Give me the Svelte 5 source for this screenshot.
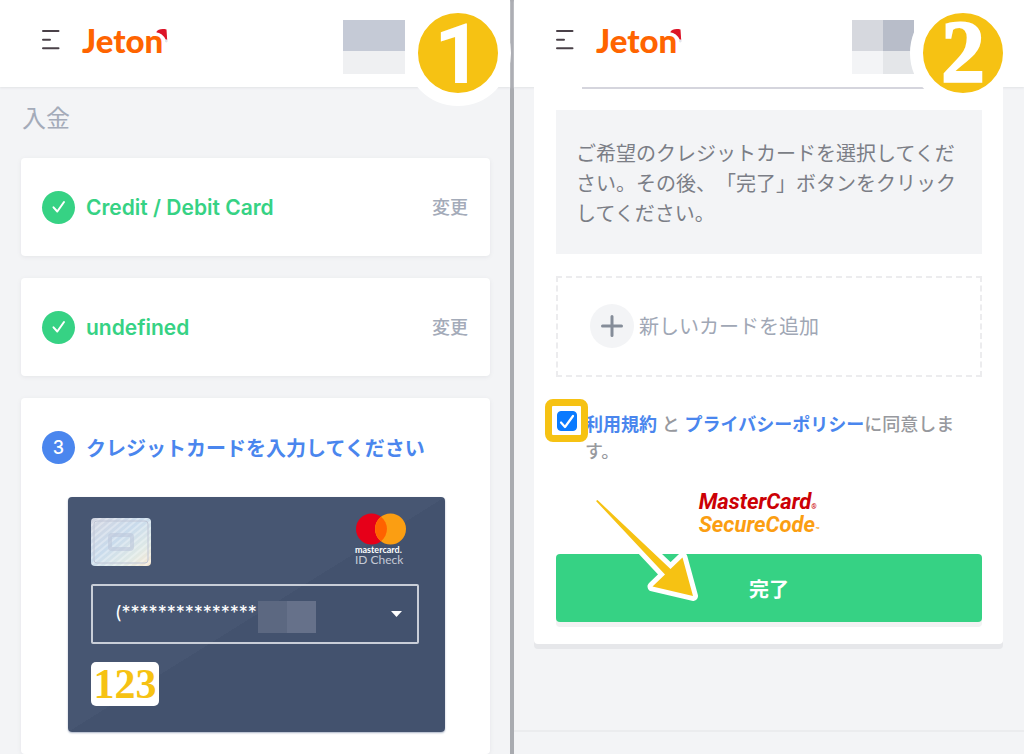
<script lang="ts">
  type Step = {
    id: number;
    title: string;
  };

  const doneSteps: Step[] = [
    { id: 1, title: 'Credit / Debit Card' },
    { id: 2, title: 'undefined' }
  ];

  let agreed = $state(true);
  let cvv = $state('123');
  let selectedCard = $state('saved');
</script>

{#snippet topbar()}
  <header class="topbar">
    <button class="menu" aria-label="Menu">
      <svg width="18" height="20" viewBox="0 0 18 20" fill="none" stroke="#4a4148" stroke-width="2" stroke-linecap="round">
        <path d="M1 1H16.5M1 9.7H8M1 18.3H16.5" />
      </svg>
    </button>
    <a class="logo" href="#home">
      Jeton
      <svg class="hat" width="14" height="14" viewBox="0 0 14 14">
        <path d="M2 3.500C4 0 8 -0.500 12.500 0.500L13.200 11L10.500 10.500Q8 5 2 3.500Z" fill="#dc1428" />
        <path d="M1.500 4.500Q8 5.500 10.500 11" stroke="#fff" stroke-width="2.500" fill="none" stroke-linecap="round" />
        <circle cx="12.300" cy="12" r="1.400" fill="#e4e5ec" />
      </svg>
    </a>
  </header>
{/snippet}

<div class="page">
  <section class="panel">
    {@render topbar()}
    <div class="mosaic mosaic-first"><i></i><i></i></div>
    <span class="badge badge-first">1</span>

    <main class="steps">
      <h1>入金</h1>

      {#each doneSteps as step (step.id)}
        <div class="card step">
          <span class="dot done">
            <svg width="14" height="14" viewBox="0 0 14 14" fill="none" stroke="#fff" stroke-width="2" stroke-linecap="round" stroke-linejoin="round">
              <path d="M1.500 7.300L5.300 11.500L12 2" />
            </svg>
          </span>
          <h2>{step.title}</h2>
          <button class="change">変更</button>
        </div>
      {/each}

      <div class="card current">
        <div class="step">
          <span class="dot">3</span>
          <h2 class="active">クレジットカードを入力してください</h2>
        </div>

        <div class="credit">
          <div class="credit-top">
            <svg width="60" height="48" viewBox="0 0 60 48">
              <defs>
                <linearGradient id="foil" x1="0" y1="0" x2="1" y2="1">
                  <stop offset="0" stop-color="#d3d5e0" />
                  <stop offset="0.450" stop-color="#c9dbec" />
                  <stop offset="0.750" stop-color="#dfe9e6" />
                  <stop offset="1" stop-color="#f8e6cf" />
                </linearGradient>
                <pattern id="lines" width="5" height="5" patternUnits="userSpaceOnUse" patternTransform="rotate(50)">
                  <rect width="2" height="5" fill="#fff" opacity="0.300" />
                </pattern>
              </defs>
              <rect width="60" height="48" rx="4" fill="url(#foil)" />
              <rect width="60" height="48" rx="4" fill="url(#lines)" />
              <rect x="3" y="3" width="54" height="42" rx="3" fill="none" stroke="#c0c6d6" />
              <rect x="19" y="17" width="22" height="14" rx="2" fill="none" stroke="#bcc6da" stroke-width="4" opacity="0.600" />
            </svg>
            <div class="idcheck">
              <svg width="52" height="32" viewBox="0 0 52 32">
                <circle cx="16.500" cy="16" r="15.500" fill="#e60019" />
                <circle cx="35.500" cy="16" r="15.500" fill="#fb9e12" />
                <path d="M26 3.800A15.500 15.500 0 0 1 26 28.200A15.500 15.500 0 0 1 26 3.800Z" fill="#ff6200" />
              </svg>
              <b>mastercard.</b>
              <span>ID Check</span>
            </div>
          </div>

          <div class="picker">
            <select aria-label="カード" bind:value={selectedCard}>
              <option value="saved">(***************</option>
            </select>
            <i class="mask"></i>
            <svg class="caret" width="11" height="6" viewBox="0 0 11 6"><path d="M0 0H11L5.500 6Z" fill="#fff" /></svg>
          </div>

          <input class="cvv" aria-label="CVV" maxlength="3" bind:value={cvv} />
        </div>
      </div>
    </main>
  </section>

  <section class="panel">
    {@render topbar()}
    <div class="mosaic mosaic-second"><i></i><i></i><i></i><i></i></div>
    <span class="badge badge-second">2</span>

    <main class="finish">
      <div class="edge"></div>
      <p class="note">ご希望のクレジットカードを選択してください。その後、「完了」ボタンをクリックしてください。</p>

      <button class="add">
        <span class="plus">
          <svg width="22" height="22" viewBox="0 0 22 22" stroke="#858d99" stroke-width="3" stroke-linecap="round">
            <path d="M11 1.500V20.500M1.500 11H20.500" />
          </svg>
        </span>
        新しいカードを追加
      </button>

      <div class="terms">
        <span class="tick">
          <input id="agree" type="checkbox" bind:checked={agreed} />
          {#if agreed}
            <svg width="20" height="20" viewBox="0 0 20 20" fill="none" stroke="#fff" stroke-width="2.200" stroke-linecap="round" stroke-linejoin="round">
              <path d="M4 11.500L8 16L16 5" />
            </svg>
          {/if}
        </span>
        <label for="agree"><a href="#terms">利用規約</a> と <a href="#privacy">プライバシーポリシー</a>に同意します。</label>
      </div>

      <div class="secure">
        <span class="red">MasterCard<small>®</small></span>
        <span class="orange">SecureCode<small>™</small></span>
      </div>

      <div class="action">
        <button class="submit">完了</button>
        <svg class="arrow" width="112" height="112" viewBox="590 494 112 112">
          <path d="M596 501L597.500 500L670.500 569L682.500 557.500L693 596L652.500 586.500L665 574.500Z" fill="#fff" stroke="#fff" stroke-width="10" stroke-linejoin="round" />
          <path d="M596 501L597.500 500L670.500 569L682.500 557.500L693 596L652.500 586.500L665 574.500Z" fill="#f6c213" />
        </svg>
      </div>
    </main>

    <footer></footer>
  </section>
</div>

<style>
:global(body) {
  margin: 0;
}
.page {
  display: grid;
  grid-template-columns: 1fr 1fr;
  column-gap: 4px;
  height: 100vh;
  overflow: hidden;
  background: #a9abb0;
  font-family: Inter, "Noto Sans CJK JP", sans-serif;
}
.page * {
  box-sizing: border-box;
}
.panel {
  position: relative;
  display: flex;
  flex-direction: column;
  min-height: 100vh;
  min-width: 0;
  background: #f3f4f6;
}
button {
  border: none;
  padding: 0;
  background: none;
  font: inherit;
  cursor: pointer;
}
a {
  color: #4a86ee;
  text-decoration: none;
}

/* header */
.topbar {
  display: flex;
  align-items: center;
  gap: 22px;
  height: 87px;
  flex: none;
  padding: 0 42px 8px;
  background: #fff;
  box-shadow: 0 1px 2px #e2e3e6;
}
.menu,
.menu svg {
  display: block;
}
.logo {
  position: relative;
  color: #ff6400;
  font-family: Lato, sans-serif;
  font-size: 33px;
  font-weight: 900;
  line-height: 40px;
}
.hat {
  position: absolute;
  top: 9px;
  right: -5px;
}
.mosaic {
  position: absolute;
  top: 20px;
  display: grid;
  grid-template-rows: 31px 23px;
  width: 62px;
}
.mosaic-first {
  left: 343px;
}
.mosaic-second {
  left: 338px;
  grid-template-columns: 1fr 1fr;
}
.mosaic-first i:nth-child(1) { background: #c5cad6; }
.mosaic-first i:nth-child(2) { background: #eff0f2; }
.mosaic-second i:nth-child(1) { background: #d6d8de; }
.mosaic-second i:nth-child(2) { background: #b8bdc9; }
.mosaic-second i:nth-child(3) { background: #f3f4f6; }
.mosaic-second i:nth-child(4) { background: #e4e6e9; }
.badge {
  position: absolute;
  top: 0;
  z-index: 2;
  display: flex;
  align-items: center;
  justify-content: center;
  width: 106px;
  height: 106px;
  border: 13px solid #fff;
  border-radius: 50%;
  background: #f6c213;
  color: #fff;
  font-weight: 700;
  line-height: 80px;
}
.badge-first {
  right: -1px;
  padding-top: 4px;
  font-family: Roboto, sans-serif;
  font-size: 84px;
}
.badge-second {
  right: 8px;
  padding-bottom: 2px;
  font-family: "Liberation Serif", serif;
  font-size: 88px;
  -webkit-text-stroke: 2px #fff;
}

/* left panel */
.steps {
  display: flex;
  flex: 1;
  flex-direction: column;
  gap: 22px;
  padding: 14px 20px 0 21px;
}
h1 {
  margin: 0;
  padding-left: 1px;
  color: #a4abb9;
  font-size: 24px;
  font-weight: 400;
  line-height: 35px;
}
.card {
  border-radius: 4px;
  background: #fff;
  box-shadow: 0 1px 4px #e4e5e8;
}
.step {
  display: flex;
  align-items: center;
  gap: 11px;
  height: 98px;
  padding: 0 22px 0 21px;
}
.dot {
  display: flex;
  align-items: center;
  justify-content: center;
  flex: none;
  width: 33px;
  height: 33px;
  border-radius: 50%;
  background: #4a86ee;
  color: #fff;
  font-size: 18px;
  font-weight: 500;
}
.done {
  background: #36d284;
}
h2 {
  flex: 1;
  margin: 0;
  color: #36d284;
  font-size: 21px;
  font-weight: 600;
  white-space: nowrap;
}
.active {
  color: #4a86ee;
  font-size: 20px;
}
.change {
  padding-bottom: 3px;
  color: #a4abb9;
  font-size: 18px;
  font-weight: 500;
}
.current {
  flex: 1;
}
.credit {
  display: flex;
  flex-direction: column;
  align-items: flex-start;
  gap: 18px;
  height: 235px;
  margin: 1px 45px 21px 47px;
  padding: 16px 26px 0 23px;
  border-radius: 4px;
  background: linear-gradient(to bottom right, #475672 50%, #43526e 50%);
  box-shadow: 0 1px 2px #aab4c6;
}
.credit-top {
  display: flex;
  justify-content: space-between;
  width: 100%;
  height: 53px;
  padding-right: 12px;
}
.credit-top > svg {
  margin-top: 5px;
}
.idcheck {
  display: flex;
  flex-direction: column;
  width: 52px;
  color: #fff;
  line-height: 10px;
  white-space: nowrap;
}
.idcheck b {
  font-family: Lato, sans-serif;
  font-size: 9px;
}
.idcheck span {
  color: #c5cad6;
  font-family: Lato, sans-serif;
  font-size: 12px;
}
.picker {
  position: relative;
  width: 100%;
}
select {
  display: block;
  width: 100%;
  height: 60px;
  padding: 0 22px 4px;
  border: 2px solid #c9ced8;
  border-radius: 2px;
  background: transparent;
  color: #fff;
  font-family: Inter, sans-serif;
  font-size: 18px;
  appearance: none;
}
.mask {
  position: absolute;
  top: 17px;
  left: 167px;
  width: 58px;
  height: 32px;
  background: linear-gradient(to right, #5c6881 50%, #66718a 50%);
}
.caret {
  position: absolute;
  top: 27px;
  right: 17px;
}
.cvv {
  width: 68px;
  height: 44px;
  padding: 0;
  border: none;
  border-radius: 5px;
  background: #fff;
  color: #f6c213;
  font-family: "Liberation Serif", serif;
  font-size: 42px;
  font-weight: 700;
  line-height: 44px;
  text-align: center;
}

/* right panel */
.finish {
  display: flex;
  flex-direction: column;
  margin: 0 21px 0 20px;
  padding: 0 21px 22px 22px;
  border-radius: 0 0 4px 4px;
  background: #fff;
  box-shadow: 0 5px 0 #e6e7ea;
}
.edge {
  position: relative;
  height: 2px;
  margin: 0 26px 21px;
  background: #d5d5dd;
}
.note {
  margin: 0 0 22px;
  padding: 29px 20px 25px;
  background: #f3f4f6;
  color: #7b7e86;
  font-size: 20px;
  line-height: 30px;
  text-spacing-trim: space-all;
}
.add {
  display: flex;
  align-items: center;
  gap: 5px;
  height: 101px;
  padding: 0 0 2px 32px;
  border: 2px dashed #ececee;
  color: #a0a7b5;
  font-size: 20px;
}
.plus {
  display: flex;
  align-items: center;
  justify-content: center;
  width: 44px;
  height: 44px;
  border-radius: 50%;
  background: #f3f4f6;
}
.terms {
  position: relative;
  margin-top: 34px;
  padding: 0 22px 0 29px;
  color: #97999e;
  font-size: 18px;
  font-weight: 500;
  line-height: 27px;
}
.terms a {
  font-weight: 600;
}
.tick {
  position: absolute;
  top: -12px;
  left: -11px;
  display: grid;
  place-items: center;
  width: 43px;
  height: 43px;
  border: 7px solid #f6c213;
  border-radius: 8px;
  background: #fff;
}
.tick > * {
  grid-area: 1 / 1;
}
.tick input {
  width: 20px;
  height: 20px;
  margin: 0;
  border: 1px solid #0a7aff;
  border-radius: 4px;
  appearance: none;
}
.tick input:checked {
  background: #0a7aff;
}
.tick svg {
  pointer-events: none;
}
.secure {
  display: flex;
  flex-direction: column;
  align-self: center;
  margin: 25px 0 18px;
  padding-right: 20px;
  font-family: Roboto, sans-serif;
  font-size: 22px;
  font-style: italic;
  font-weight: 700;
  line-height: 23px;
}
.secure small {
  font-size: 7px;
  line-height: 0;
}
.red {
  color: #cc0005;
}
.orange {
  color: #fb9e12;
}
.action {
  position: relative;
}
.submit {
  display: block;
  width: 100%;
  height: 68px;
  border-radius: 4px;
  background: #36d284;
  box-shadow: 0 5px 0 #f2f2f3;
  color: #fff;
  font-size: 20px;
  font-weight: 600;
}
.arrow {
  position: absolute;
  top: -60px;
  left: 34px;
  pointer-events: none;
}
footer {
  height: 24px;
  margin-top: auto;
  border-top: 2px solid #ebecee;
}
</style>
